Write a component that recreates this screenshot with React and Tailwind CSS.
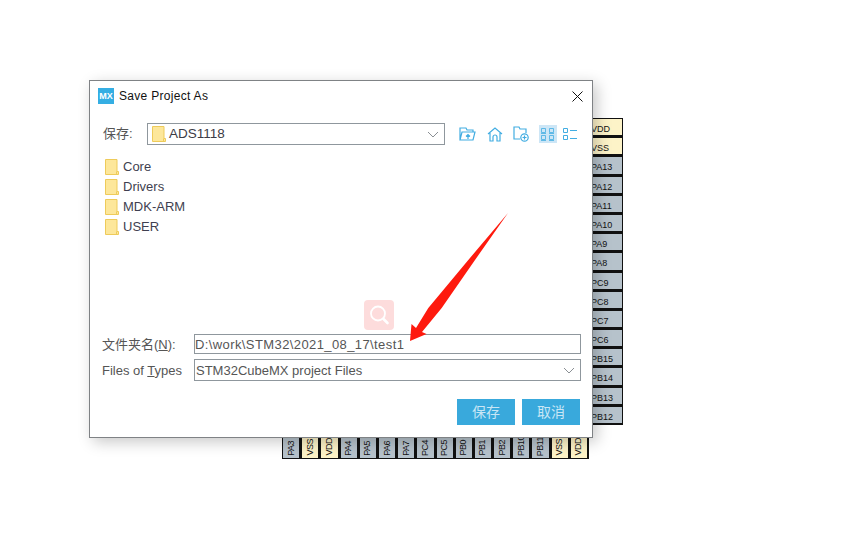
import React from 'react'

const rightPins = [
  ['VDD', 1], ['VSS', 1], ['PA13'], ['PA12'], ['PA11'], ['PA10'], ['PA9'], ['PA8'],
  ['PC9'], ['PC8'], ['PC7'], ['PC6'], ['PB15'], ['PB14'], ['PB13'], ['PB12'],
]
const bottomPins = [
  ['PA3'], ['VSS', 1], ['VDD', 1], ['PA4'], ['PA5'], ['PA6'], ['PA7'], ['PC4'],
  ['PC5'], ['PB0'], ['PB1'], ['PB2'], ['PB10'], ['PB11'], ['VSS', 1], ['VDD', 1],
]
const folders = ['Core', 'Drivers', 'MDK-ARM', 'USER']

const FolderIcon = () => (
  <svg width="14" height="16" viewBox="0 0 14 16" className="shrink-0">
    <path d="M.5.5h11.5v12h1.5v3H.5z" fill="#fde79a" stroke="#eecb5a" />
    <path d="M11.5 12.5v3" stroke="#eecb5a" />
  </svg>
)

const Chevron = () => (
  <svg width="12" height="7" viewBox="0 0 12 7" className="shrink-0">
    <path d="M1 1l5 5 5-5" fill="none" stroke="#8a8f94" />
  </svg>
)

export default function App() {
  return (
    <div className="relative w-[860px] h-[556px] bg-white overflow-hidden font-['Liberation_Sans','Noto_Sans_CJK_SC',sans-serif]">
      {/* chip pins behind the dialog */}
      <div className="absolute left-[588px] top-[118px] flex flex-col">
        {rightPins.map(([name, power], i) => (
          <div key={i} className={`w-[35px] h-[19.2px] border border-[#111] border-b-2 pl-[2px] text-[9px] leading-[20px] text-[#111] ${power ? 'bg-[#fdf3c8]' : 'bg-[#b6c2cb]'}`}>{name}</div>
        ))}
      </div>
      <div className="absolute left-[282px] top-[424px] flex">
        {bottomPins.map(([name, power], i) => (
          <div key={i} className={`w-[19.2px] h-[35px] border border-[#111] border-r-2 flex items-end justify-center pb-[2px] ${power ? 'bg-[#fdf3c8]' : 'bg-[#b6c2cb]'}`}>
            <span className="text-[9px] tracking-[-0.5px] leading-none text-[#111] whitespace-nowrap [writing-mode:vertical-rl] rotate-180">{name}</span>
          </div>
        ))}
      </div>

      {/* dialog */}
      <div className="absolute left-[89px] top-[80px] w-[504px] h-[358px] bg-white border border-[#7f8285] shadow-[4px_4px_14px_rgba(0,0,0,0.22)] flex flex-col text-[13px] text-[#3c3c46]">
        <div className="flex items-center h-[30px] pl-[8px] pr-[9px]">
          <div className="w-[16px] h-[16px] bg-[#35aee3] text-white text-[9px] font-bold leading-[16px] text-center">MX</div>
          <span className="ml-[5px] text-[12px] tracking-[0.3px] text-[#111]">Save Project As</span>
          <svg width="11" height="11" viewBox="0 0 11 11" className="ml-auto">
            <path d="M.5.5l10 10M10.5.5l-10 10" stroke="#111" />
          </svg>
        </div>

        <div className="flex items-center h-[22px] mt-[12px] pl-[13px]">
          <span className="w-[44px] text-[#555]">保存:</span>
          <div className="flex items-center w-[298px] h-[22px] border border-[#8f979d] pl-[4px] pr-[5px]">
            <FolderIcon />
            <span className="ml-[3px] text-[13.5px]">ADS1118</span>
            <span className="ml-auto"><Chevron /></span>
          </div>
          <div className="flex items-center ml-[14px]">
            <svg width="17" height="16" viewBox="0 0 17 16" fill="none" stroke="#42ade2" strokeWidth="1.2">
              <path d="M1 14V2h6l1 2h6v2M1 14l2-8h13l-2 8zM9 13v-4M7 10.5l2-2 2 2" />
            </svg>
            <svg width="16" height="15" viewBox="0 0 16 15" fill="none" stroke="#42ade2" strokeWidth="1.2" className="ml-[11px]">
              <path d="M1 7l7-6 7 6M3 6v8h3v-4a2 2 0 0 1 4 0v4h3V6" />
            </svg>
            <svg width="16" height="16" viewBox="0 0 16 16" fill="none" stroke="#42ade2" strokeWidth="1.2" className="ml-[10px]">
              <path d="M7 13H1V1h5l1 2h6v4" />
              <circle cx="11.5" cy="11.5" r="3.7" />
              <path d="M9.5 11.5h4M11.5 9.5v4" />
            </svg>
            <div className="flex items-center justify-center w-[18px] h-[18px] ml-[10px] bg-[#cde6f6]">
              <svg width="14" height="13" viewBox="0 0 14 13" fill="none" stroke="#42ade2">
                <path d="M.5.5h4v4h-4zM8.5.5h4v4h-4zM.5 7.5h4v4h-4zM8.5 7.5h4v4h-4zM0 12.5h5M8 12.5h5M0 5.5h5M8 5.5h5" strokeWidth=".8" />
              </svg>
            </div>
            <svg width="15" height="13" viewBox="0 0 15 13" fill="none" stroke="#42ade2" className="ml-[6px]">
              <path d="M.5.5h4v4h-4zM.5 7.5h4v4h-4zM7 2.5h7M7 10.5h7" />
            </svg>
          </div>
        </div>

        <div className="flex flex-col mt-[14px] pl-[15px] gap-[4px]">
          {folders.map(f => (
            <div key={f} className="flex items-center h-[16px]">
              <FolderIcon />
              <span className="ml-[4px] text-[#3f3f50] text-[13px]">{f}</span>
            </div>
          ))}
        </div>

        <div className="flex items-center mt-auto h-[20px] pl-[12px] pr-[11px]">
          <span className="w-[92px] pt-[2px] text-[#555] whitespace-nowrap">文件夹名(<span className="underline">N</span>):</span>
          <div className="flex-1 h-[20px] border border-[#8f979d] leading-[19px] text-[13px] tracking-[0.4px] text-[#555]">D:\work\STM32\2021_08_17\test1</div>
        </div>
        <div className="flex items-center mt-[5px] h-[22px] pl-[12px] pr-[11px]">
          <span className="w-[92px] pt-[2px] text-[#555] text-[13px] whitespace-nowrap">Files of <span className="underline">T</span>ypes</span>
          <div className="flex items-center flex-1 h-[22px] border border-[#8f979d] pl-[1px] pr-[5px] text-[13px] text-[#555]">
            <span className="pt-[2px]">STM32CubeMX project Files</span>
            <span className="ml-auto"><Chevron /></span>
          </div>
        </div>
        <div className="flex justify-end gap-[7px] mt-[18px] mb-[12px] pr-[12px]">
          <button className="w-[58px] h-[26px] bg-[#39a9dc] text-[#c9e6f5] text-[14px]">保存</button>
          <button className="w-[58px] h-[26px] bg-[#39a9dc] text-[#c9e6f5] text-[14px]">取消</button>
        </div>
      </div>

      {/* watermark and annotation over the dialog */}
      <div className="absolute left-[364px] top-[300px] w-[30px] h-[30px] rounded-[4px] bg-[#fddcdc]">
        <svg width="30" height="30" viewBox="0 0 30 30" fill="none" stroke="#fff" strokeWidth="1.8">
          <circle cx="14" cy="13.5" r="7" />
          <path d="M19.5 19l4 4" strokeWidth="2.6" strokeLinecap="round" />
        </svg>
      </div>
      <svg width="120" height="140" viewBox="400 205 120 140" className="absolute left-[400px] top-[205px]">
        <path d="M508 213L475 260L441.7 308L422 332L426.5 334L410 341L411.5 324L416 328L428.3 308L468.3 260z" fill="#fe1a0e" />
      </svg>
    </div>
  )
}
